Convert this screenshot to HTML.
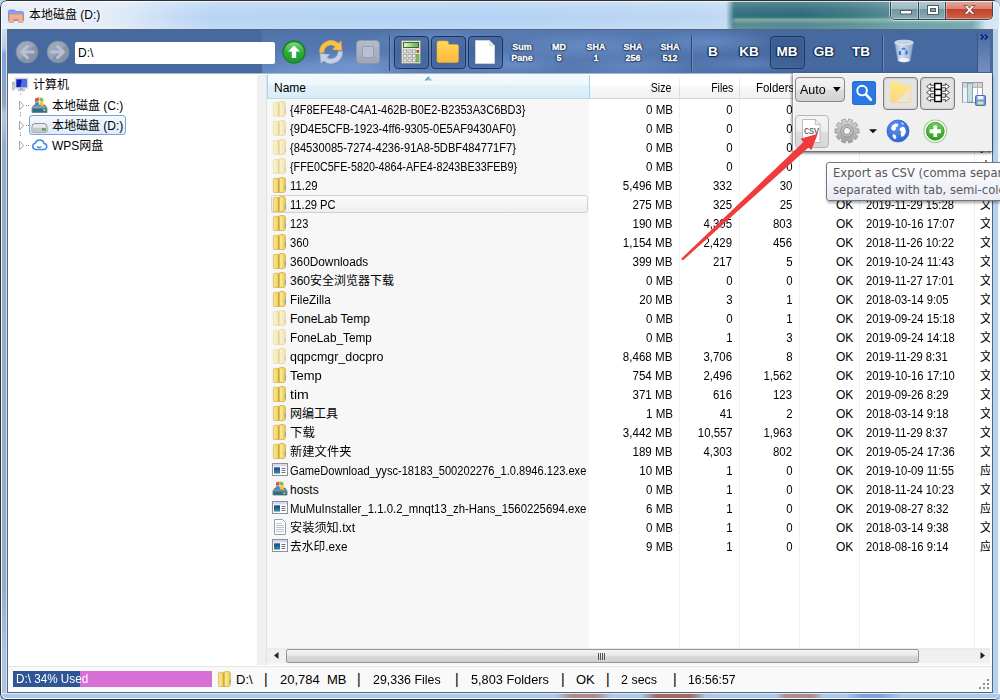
<!DOCTYPE html>
<html lang="zh-CN">
<head>
<meta charset="utf-8">
<title>本地磁盘 (D:)</title>
<style>
*{box-sizing:border-box;margin:0;padding:0}
html,body{width:1000px;height:700px;overflow:hidden}
body{position:relative;font-family:"Liberation Sans","Noto Sans CJK SC",sans-serif;font-size:12px;color:#000;background:#b9d1ea}
.abs{position:absolute}
/* ---------- window frame ---------- */
#frame{position:absolute;left:0;top:0;width:1000px;height:700px;border-radius:7px 7px 6px 6px;
 background:linear-gradient(90deg,#e4edf8 0,#e2ecf8 110px,#c6dcf5 175px,#b7d4f5 215px,#b4d2f4 500px,#bdd7f3 700px,#c2daf3 726px,#357583 734px,#2f6f80 800px,#3f7e8b 850px,#5b96a2 900px,#6ba2ad 972px,#cfe2f5 986px,#d6e6f6 1000px);overflow:hidden}
#frame:before{content:"";position:absolute;left:1px;top:1px;right:0;bottom:1px;border:1px solid rgba(255,255,255,.75);border-radius:6px;z-index:3}
#frame:after{content:"";position:absolute;left:0;top:0;right:-1px;bottom:0;border:1px solid #2b2f36;border-radius:7px 7px 6px 6px;z-index:4}
#tglow{position:absolute;left:1px;top:1px;width:998px;height:28px;background:linear-gradient(180deg,rgba(255,255,255,.25) 0,rgba(255,255,255,.08) 30%,rgba(255,255,255,0) 60%,rgba(255,255,255,.12) 100%)}
#teal{position:absolute;left:730px;top:1px;width:256px;height:28px;background:linear-gradient(180deg,rgba(20,60,70,.1) 0,rgba(20,60,70,.12) 50%,rgba(170,200,170,.0) 58%,rgba(190,215,180,.55) 66%,rgba(190,215,180,.4) 74%,rgba(120,170,175,.35) 82%,rgba(120,170,175,.35) 100%);-webkit-mask-image:linear-gradient(90deg,transparent 0,#000 6px,#000 236px,transparent 252px);mask-image:linear-gradient(90deg,transparent 0,#000 6px,#000 236px,transparent 252px)}
#sideL{position:absolute;left:1px;top:29px;width:6px;height:664px;background:linear-gradient(180deg,#cfdef0 0,#b5cdea 18px,#7fa6d8 25px,#7fa6d8 50px,#8fa3bd 58px,#93a6be 75px,#b4c6dc 85px,#aabdd6 100px,#93adcb 115px,#93adcb 560px,#a8c4e2 620px,#a8c4e2 100%);border-left:1px solid #e6f0fa;border-right:1px solid #cfe0f2}
#sideR{position:absolute;left:993px;top:29px;width:7px;height:664px;background:#b5d3f1;border-right:2px solid #eef5fc}
#sideB{position:absolute;left:1px;top:693px;width:999px;height:6px;background:linear-gradient(90deg,#a9c9ee 0,#a9c9ee 555px,#b08a8a 570px,#b08a8a 595px,#a9c9ee 610px,#a9c9ee 640px,#a36a64 655px,#a36a64 690px,#a9c9ee 705px,#a9c9ee 775px,#b28c8c 785px,#b28c8c 812px,#a9c9ee 822px,#a9c9ee 845px,#7fa3dc 860px,#7fa3dc 880px,#a9c9ee 900px);border-top:1px solid #dbe9f6;border-bottom:1px solid #dbe9f6}
#inner{position:absolute;left:7px;top:29px;width:986px;height:664px;border:1px solid #5a6675;background:#fff}
#titleicon{position:absolute;left:7px;top:7px}
#title{position:absolute;left:29px;top:6px;font-size:12px;line-height:18px;color:#000;white-space:nowrap;text-shadow:0 0 6px #fff,0 0 8px #fff,0 0 10px #fff}
/* window controls */
#ctl{position:absolute;left:890px;top:0;width:103px;height:20px;border:1px solid #3a4550;border-top:0;border-radius:0 0 5px 5px;overflow:hidden;box-shadow:0 0 0 1px rgba(255,255,255,.55)}
#ctl div{position:absolute;top:0;height:19px;box-shadow:inset 0 0 0 1px rgba(255,255,255,.35)}
#cmin{left:0;width:28px;background:linear-gradient(180deg,#b7cdd3 0,#9dbac2 45%,#6e97a2 50%,#88aeb8 100%);border-right:1px solid #3a4550}
#cmax{left:28px;width:27px;background:linear-gradient(180deg,#b7cdd3 0,#9dbac2 45%,#6e97a2 50%,#88aeb8 100%);border-right:1px solid #3a4550}
#ccls{left:55px;width:47px;background:linear-gradient(180deg,#e9aea0 0,#d98573 45%,#c2432a 50%,#d2634a 100%)}
/* ---------- toolbar ---------- */
#tb{position:absolute;left:8px;top:30px;width:984px;height:44px;background:#466a9f;overflow:hidden;z-index:2;border-bottom:1px solid #a3b6d2}
#smoke{position:absolute;left:0;top:0;width:984px;height:44px;background:
 linear-gradient(90deg,rgba(125,160,220,0) 253px,rgba(125,160,220,.28) 255px,rgba(125,160,220,.28) 600px,rgba(125,160,220,.18) 700px,rgba(125,160,220,0) 770px),
 radial-gradient(ellipse 55px 16px at 345px 36px,rgba(125,160,220,.55),rgba(125,160,220,0) 100%),
 radial-gradient(ellipse 45px 12px at 300px 40px,rgba(125,160,220,.35),rgba(125,160,220,0) 100%),
 radial-gradient(ellipse 70px 12px at 420px 10px,rgba(125,160,220,.45),rgba(125,160,220,0) 100%),
 radial-gradient(ellipse 60px 12px at 500px 34px,rgba(125,160,220,.5),rgba(125,160,220,0) 100%),
 radial-gradient(ellipse 80px 14px at 580px 16px,rgba(125,160,220,.45),rgba(125,160,220,0) 100%),
 radial-gradient(ellipse 60px 12px at 625px 36px,rgba(125,160,220,.35),rgba(125,160,220,0) 100%),
 radial-gradient(ellipse 70px 12px at 700px 12px,rgba(125,160,220,.45),rgba(125,160,220,0) 100%),
 radial-gradient(ellipse 60px 9px at 745px 34px,rgba(125,160,220,.35),rgba(125,160,220,0) 100%)}
#smoke2{position:absolute;left:254px;top:0;width:190px;height:44px;background:linear-gradient(180deg,rgba(60,95,150,.25) 0,rgba(125,160,220,0) 45%,rgba(135,170,228,.38) 100%);-webkit-mask-image:linear-gradient(90deg,#000 0,#000 110px,transparent 190px);mask-image:linear-gradient(90deg,#000 0,#000 110px,transparent 190px)}
#tb .sep{position:absolute;top:5px;width:2px;height:36px;border-left:1px solid #2b4674;border-right:1px solid #6d8cbd}
#addr{position:absolute;left:67px;top:11.500px;width:200px;height:22px;background:#fff;border-radius:2px;font-size:12px;line-height:22px;padding-left:3px}
.tbtn{position:absolute;top:6px;width:35px;height:33px;border:1px solid #1c355c;border-radius:4px;background:rgba(40,70,120,.35);box-shadow:inset 0 0 0 1px rgba(90,120,170,.35)}
.sum{-webkit-text-stroke:.3px #fff;position:absolute;top:11.500px;width:40px;text-align:center;font-weight:bold;font-size:9px;line-height:11.300px;color:#fff;text-shadow:0 0 2px #10254a,0 1px 1px #10254a,1px 0 1px #10254a,-1px 0 1px #10254a}
.unit{position:absolute;top:13px;width:36px;text-align:center;font-weight:bold;font-size:13.600px;line-height:18px;color:#fff;text-shadow:0 0 2px #10254a,0 1px 1px #10254a,1px 0 1px #10254a,-1px 0 1px #10254a}
#ovf{position:absolute;left:969px;top:3px;width:13px;height:39px;background:linear-gradient(180deg,#4a6ba0,#7690bd);border-left:1px solid #3a5686}
/* ---------- tree ---------- */
#tree{position:absolute;left:8px;top:73px;width:249px;height:593px;background:#fff}
.tn{position:absolute;font-size:12px;line-height:18px;white-space:nowrap}
#split{position:absolute;left:257px;top:75px;width:10px;height:590px;background:#f0f0f0;border-right:1px solid #e2e2e2}
/* ---------- list ---------- */
#list{position:absolute;left:267px;top:73px;width:723px;height:575px;background:#fff;overflow:hidden}
#ncol{position:absolute;left:0;top:0;width:322px;height:575px;background:#f7f7f7}
.vl{position:absolute;top:26px;width:1px;height:549px;background:#eaf0f7}
#hdr{position:absolute;left:0;top:2px;width:723px;height:24px;background:linear-gradient(180deg,#fff 0,#fff 45%,#f7f8fa 50%,#f1f2f4 100%);border-bottom:1px solid #d5d5d5}
#hname{position:absolute;left:0;top:0;width:323px;height:24px;border-bottom:1px solid #bddbe9;background:linear-gradient(180deg,#f3f9fd 0,#f1f8fc 40%,#e2f1f9 44%,#d9ecf6 100%);border-left:1px solid #96d9f9;border-right:1px solid #96d9f9}
.hc{position:absolute;top:5px;font-size:12px;line-height:16px;white-space:nowrap}
.hs{position:absolute;top:2px;width:1px;height:20px;background:linear-gradient(180deg,#f2f2f2,#d5d5d5)}
.row{position:absolute;left:0;width:723px;height:19px;line-height:19px;font-size:12px;white-space:nowrap}
.row .ic{position:absolute;left:5px;top:1px}
.row .nm{position:absolute;left:23px;top:1px;transform-origin:0 50%}
.row .c{position:absolute;top:1px}
.sz{right:317.300px;transform:scaleX(.965);transform-origin:100% 50%}.fl{right:257.500px;transform:scaleX(.95);transform-origin:100% 50%}.fd{right:197.500px;transform:scaleX(.95);transform-origin:100% 50%}.ok{left:569px}.dt{left:598.500px;transform:scaleX(.937);transform-origin:0 50%}.ty{left:713px}
#hov{position:absolute;left:4px;top:122px;width:317px;height:18px;border:1px solid #cdd2da;border-radius:3px;background:linear-gradient(180deg,#fbfbfb,#eceef1)}
/* scrollbar */
#hsb{position:absolute;left:267px;top:648px;width:723px;height:17px;background:linear-gradient(180deg,#e9e9e9 0,#f0f0f0 3px,#f0f0f0 15px,#f8f8f8 15px)}
#thumb{position:absolute;left:19px;top:.5px;width:633px;height:14px;border:1px solid #979797;border-radius:2px;background:linear-gradient(180deg,#f3f3f3 0,#e8e8e9 45%,#d9dadb 50%,#cfcfd0 100%)}
/* ---------- status ---------- */
#status{position:absolute;left:8px;top:666px;width:984px;height:26px;background:#f9f9f9;border-top:1px solid #e6e6e6;font-size:13px;line-height:26px;white-space:nowrap}
#status span{position:absolute;top:0;transform-origin:0 50%}
#pbar{position:absolute;left:5px;top:4px;width:199px;height:16px;background:#d670d6}
#pfill{position:absolute;left:0;top:0;width:67px;height:16px;background:#2f5597}
#ptext{position:absolute;left:3px;top:0;font-size:12px;line-height:16px;color:#fff;transform:scaleX(.975);transform-origin:0 50%;white-space:nowrap}
/* ---------- popup ---------- */
#pop{z-index:5;position:absolute;left:793px;top:73px;width:199px;height:78px;background:#f0f0f0;border-left:1px solid #fbfbfb;border-top:1px solid #fbfbfb;box-shadow:0 1px 0 rgba(110,110,110,.8),-1px 1px 3px rgba(0,0,0,.45),0 2px 3px rgba(0,0,0,.4)}
.pbtn{position:absolute;border:1px solid #8a8a8a;border-radius:4px;background:linear-gradient(180deg,#f2f2f2 0,#ebebeb 48%,#dddddd 52%,#d2d2d2 100%)}
.pbtn2{position:absolute;border:1px solid #7c7c7c;border-radius:4px;background:#e3e3e3;box-shadow:inset 0 0 2px rgba(0,0,0,.25)}
#tip{z-index:6;position:absolute;left:826px;top:162px;width:190px;height:39px;border:1px solid #767676;border-radius:3px;background:linear-gradient(180deg,#fff,#e9ebf6);box-shadow:1px 2px 3px rgba(0,0,0,.35);font-family:"DejaVu Sans","Liberation Sans",sans-serif;font-size:11.600px;line-height:17px;color:#575757;padding:2px 0 0 6px;white-space:nowrap;overflow:hidden}
</style>
</head>
<body>
<svg width="0" height="0" style="position:absolute">
<defs>
<linearGradient id="gF" x1="0" y1="0" x2="1" y2="0"><stop offset="0" stop-color="#f8e9a0"/><stop offset=".5" stop-color="#f3d978"/><stop offset="1" stop-color="#e8c452"/></linearGradient>
<linearGradient id="gFp" x1="0" y1="0" x2="1" y2="0"><stop offset="0" stop-color="#fbf4d2"/><stop offset=".5" stop-color="#f6ecbf"/><stop offset="1" stop-color="#efe2aa"/></linearGradient>
<symbol id="i-f" viewBox="0 0 16 16"><path d="M1.400 2.200q0-.8 .8-.8h4.300l.8 .8v12.800l-.8 .5h-4.300q-.8 0-.8-.8z" fill="url(#gF)" stroke="#d3b144" stroke-width=".7"/><path d="M6.800 1.500l1.200-.9h4.200l1.200 1.300v12.200l-1.300 1.400h-5.300z" fill="url(#gF2)" stroke="#cfa93c" stroke-width=".7"/><path d="M6.900 1.800v13.400" stroke="#c19c25" stroke-width=".9"/><path d="M8 2.200h1.600v12.400h-1.600z" fill="#fbeea8" opacity=".55"/><path d="M13.300 8.500v4" stroke="#6f9fc4" stroke-width="1"/></symbol>
<symbol id="i-fp" viewBox="0 0 16 16"><path d="M1.400 2.200q0-.8 .8-.8h4.300l.8 .8v12.800l-.8 .5h-4.300q-.8 0-.8-.8z" fill="url(#gFp)" stroke="#e9dca8" stroke-width=".7"/><path d="M6.800 1.500l1.200-.9h4.200l1.200 1.300v12.200l-1.300 1.400h-5.300z" fill="url(#gFp)" stroke="#e3d499" stroke-width=".7"/><path d="M6.900 1.800v13.400" stroke="#dccb8c" stroke-width=".9"/><path d="M13.300 8.500v4" stroke="#b4cbe0" stroke-width="1"/></symbol>
<symbol id="i-exe" viewBox="0 0 16 16"><rect x=".5" y="1.5" width="15" height="12" fill="#fff" stroke="#8a8f98"/><rect x="1" y="2" width="14" height="2.5" fill="#d5dbe4"/><rect x="2" y="5.5" width="6" height="6" fill="#2c7f8c"/><rect x="2" y="5.5" width="6" height="3" fill="#2b4f9e"/><path d="M9.5 6.5h4M9.5 8.5h4M9.5 10.5h4" stroke="#6d7480" stroke-width="1"/></symbol>
<symbol id="i-txt" viewBox="0 0 16 16"><path d="M2.5 .5h8l3 3v12h-11z" fill="#fff" stroke="#9aa0a8"/><path d="M4 4.5h6M4 6.5h8M4 8.5h8M4 10.5h8M4 12.5h8" stroke="#b9c3d0" stroke-width="1"/></symbol>
<symbol id="i-hosts" viewBox="0 0 16 16"><path d="M1 10l2-3h10l2 3v4H1z" fill="#7f9096" stroke="#4e5f66" stroke-width=".7"/><rect x="1.5" y="10.5" width="13" height="3.5" fill="#2f6f86"/><rect x="11" y="11.5" width="2.5" height="1.5" fill="#7fe06a"/><path d="M4 1.5l3.5-1v3.5l-3.5 1z" fill="#e8502c"/><path d="M8 .5l3.5 1v3.5l-3.500-1z" fill="#7cc242"/><path d="M4 5.500l3.500-1v3.500l-3.500 1z" fill="#3a8ee0"/><path d="M8 4.500l3.500 1v3.500l-3.500-1z" fill="#f5c431"/></symbol>
<radialGradient id="gNav" cx=".5" cy=".3" r=".8"><stop offset="0" stop-color="#a4aebf"/><stop offset=".6" stop-color="#8f9bb0"/><stop offset="1" stop-color="#8593ab"/></radialGradient>
<linearGradient id="gUp" x1="0" y1="0" x2="0" y2="1"><stop offset="0" stop-color="#7fd97e"/><stop offset=".5" stop-color="#2fae3a"/><stop offset="1" stop-color="#1f9a2c"/></linearGradient>
<linearGradient id="gStop" x1="0" y1="0" x2="0" y2="1"><stop offset="0" stop-color="#b5bccb"/><stop offset="1" stop-color="#9da6b8"/></linearGradient>
<linearGradient id="gLcd" x1="0" y1="0" x2="1" y2="0"><stop offset="0" stop-color="#e8f5dc"/><stop offset="1" stop-color="#5fae45"/></linearGradient>
<linearGradient id="gFold" x1="0" y1="0" x2="0" y2="1"><stop offset="0" stop-color="#ffd95a"/><stop offset="1" stop-color="#fdb93a"/></linearGradient>
<linearGradient id="gFold2" x1="0" y1="0" x2="0" y2="1"><stop offset="0" stop-color="#fee97f"/><stop offset="1" stop-color="#fbd48c"/></linearGradient>
<linearGradient id="gBin" x1="0" y1="0" x2="1" y2="0"><stop offset="0" stop-color="#93acd0"/><stop offset=".35" stop-color="#d5e1ef"/><stop offset=".6" stop-color="#b9cbe2"/><stop offset="1" stop-color="#8ea8cc"/></linearGradient>
<radialGradient id="gGlobe" cx=".4" cy=".3" r=".8"><stop offset="0" stop-color="#5f93f2"/><stop offset="1" stop-color="#2a5fd0"/></radialGradient>
<linearGradient id="gPlus" x1="0" y1="0" x2="0" y2="1"><stop offset="0" stop-color="#6fcf5a"/><stop offset="1" stop-color="#2c9a22"/></linearGradient>
<linearGradient id="gGear" x1="0" y1="0" x2="0" y2="1"><stop offset="0" stop-color="#d2d2d2"/><stop offset=".5" stop-color="#bcbcbc"/><stop offset="1" stop-color="#9f9f9f"/></linearGradient>
<linearGradient id="gF2" x1="0" y1="0" x2="1" y2="0"><stop offset="0" stop-color="#f3d666"/><stop offset=".45" stop-color="#f8e184"/><stop offset="1" stop-color="#e9c44e"/></linearGradient>
<linearGradient id="gNav2" x1="0" y1="0" x2="1" y2="1"><stop offset="0" stop-color="#a3adbf"/><stop offset=".5" stop-color="#98a3b7"/><stop offset=".52" stop-color="#8894a9"/><stop offset="1" stop-color="#8591a7"/></linearGradient>
</defs>
</svg>

<div id="frame">
 <div id="tglow"></div><div id="teal"></div>
 <div id="sideL"></div><div id="sideR"></div><div id="sideB"></div>
 <div id="inner"></div>
 <svg id="titleicon" width="18" height="18" viewBox="0 0 18 18">
  <path d="M1.500 4.500q0-1.500 1.500-1.500h4.500l1.500 1.500h6q1.500 0 1.500 1.500v7.500h-15z" fill="#8aa0ea" stroke="#7286d8" stroke-width=".8"/>
  <path d="M2.500 7.500h13l.5 8h-4.500v-3.500h-5v3.500h-4.500z" fill="#f5b08a" stroke="#e99a72" stroke-width=".8"/>
 </svg>
 <div id="title">本地磁盘 (D:)</div>
 <div id="ctl">
  <div id="cmin"><svg width="27" height="19"><rect x="9.500" y="10.500" width="11" height="3.500" fill="#fff" stroke="#4f5f68"/></svg></div>
  <div id="cmax"><svg width="27" height="19"><rect x="8.500" y="5.500" width="11" height="9" fill="#fff" stroke="#4f5f68"/><rect x="11.500" y="8.500" width="5" height="3" fill="#86a7b1" stroke="#4f5f68"/></svg></div>
  <div id="ccls"><svg width="47" height="19"><path d="M18 5.500h3.200l2.300 2.600 2.300-2.600h3.200l-3.900 4.400 3.900 4.400h-3.200l-2.300-2.600-2.300 2.600h-3.200l3.900-4.400z" fill="#fff" stroke="#6b3a33" stroke-width=".8"/></svg></div>
 </div>
</div>

<!-- TOOLBAR -->
<div id="tb">
 <div id="smoke"></div><div id="smoke2"></div>
 <!-- back / forward -->
 <svg class="abs" style="left:7px;top:10px" width="24" height="24" viewBox="0 0 24 24"><circle cx="12" cy="12" r="11.300" fill="#7f8ba1"/><circle cx="12" cy="12" r="10.400" fill="url(#gNav2)"/><path d="M12.400 6.300L6.500 12l5.900 5.700M6.800 12h11.500" fill="none" stroke="#b7c1d3" stroke-width="3" stroke-linecap="round" stroke-linejoin="round"/></svg>
 <svg class="abs" style="left:38px;top:10px" width="24" height="24" viewBox="0 0 24 24"><circle cx="12" cy="12" r="11.300" fill="#7f8ba1"/><circle cx="12" cy="12" r="10.400" fill="url(#gNav2)"/><path d="M11.600 6.300L17.500 12l-5.900 5.700M17.200 12h-11.500" fill="none" stroke="#b7c1d3" stroke-width="3" stroke-linecap="round" stroke-linejoin="round"/></svg>
 <div id="addr">D:\</div>
 <!-- up -->
 <svg class="abs" style="left:274px;top:10px" width="24" height="24" viewBox="0 0 24 24"><circle cx="12" cy="12" r="11.200" fill="#1f9a2c" stroke="#0f7a1c" stroke-width="1"/><circle cx="12" cy="12" r="9.800" fill="url(#gUp)"/><path d="M12 5.500l6 6h-3.800v6.500h-4.400v-6.500h-3.800z" fill="#fff"/></svg>
 <!-- refresh -->
 <svg class="abs" style="left:310px;top:9px" width="26" height="26" viewBox="0 0 26 26"><path d="M1.500 13.500A11.500 11.500 0 0 1 20.500 4.300L23 1.800L24 11.500L14.300 10.500L17.200 7.600A7 7 0 0 0 6 13.500z" fill="#f7c24c" stroke="#dca338" stroke-width=".6"/><path d="M24.500 12.500A11.500 11.500 0 0 1 5.500 21.700L3 24.200L2 14.500L11.700 15.500L8.800 18.400A7 7 0 0 0 20 12.500z" fill="#c5d0e2" stroke="#a3b3cc" stroke-width=".6"/></svg>
 <!-- stop -->
 <svg class="abs" style="left:348px;top:10px" width="24" height="24" viewBox="0 0 24 24"><rect x=".5" y=".5" width="23" height="23" rx="3.500" fill="url(#gStop)" stroke="#8d97ac"/><rect x="6.500" y="6.500" width="11" height="11" fill="#b9c0cf" stroke="#969fb3"/></svg>
 <div class="sep" style="left:381px"></div>
 <!-- calc / folder / doc buttons -->
 <div class="tbtn" style="left:386px"></div><div class="tbtn" style="left:423px"></div><div class="tbtn" style="left:460px"></div>
 <svg class="abs" style="left:393px;top:10px" width="20" height="24" viewBox="0 0 20 24"><rect x=".5" y=".5" width="19" height="23" rx="1" fill="#e4e4e0" stroke="#8e8e88"/><rect x="2.500" y="2.500" width="15" height="5" fill="url(#gLcd)" stroke="#3b6b2e"/><g fill="#f7f7f5" stroke="#9a9a94" stroke-width=".8"><rect x="2.500" y="10" width="3" height="2.800"/><rect x="7" y="10" width="3" height="2.800"/><rect x="11.500" y="10" width="3" height="2.800"/><rect x="2.500" y="14.500" width="3" height="2.800"/><rect x="7" y="14.500" width="3" height="2.800"/><rect x="11.500" y="14.500" width="3" height="2.800"/><rect x="2.500" y="19" width="3" height="2.800"/><rect x="7" y="19" width="3" height="2.800"/><rect x="11.500" y="19" width="3" height="2.800"/></g><rect x="15.500" y="10" width="2.500" height="2.800" fill="#d8392b"/><rect x="15.500" y="14.500" width="2.500" height="7.300" fill="#7cc25a" stroke="#4f9a36" stroke-width=".6"/></svg>
 <svg class="abs" style="left:428px;top:10px" width="24" height="24" viewBox="0 0 24 24"><path d="M1 3q0-2 2-2h7.500q2 0 2 2v1.500h8q2 0 2 2v14q0 2-2 2h-17.500q-2 0-2-2z" fill="url(#gFold)" stroke="#eab030" stroke-width=".6"/></svg>
 <svg class="abs" style="left:467px;top:10px" width="20" height="24" viewBox="0 0 20 24"><path d="M.5 .5h14l5 5v18h-19z" fill="#fff" stroke="#d6d9de" stroke-width=".8"/><path d="M14.500 .5v5h5z" fill="#e4e7ec" stroke="#c9ccd2" stroke-width=".6"/></svg>
 <div class="sum" style="left:494px">Sum<br>Pane</div>
 <div class="sum" style="left:531px">MD<br>5</div>
 <div class="sum" style="left:568px">SHA<br>1</div>
 <div class="sum" style="left:605px">SHA<br>256</div>
 <div class="sum" style="left:642px">SHA<br>512</div>
 <div class="sep" style="left:683px"></div>
 <div class="tbtn" style="left:762px"></div>
 <div class="unit" style="left:687px">B</div>
 <div class="unit" style="left:723px">KB</div>
 <div class="unit" style="left:761px">MB</div>
 <div class="unit" style="left:798px">GB</div>
 <div class="unit" style="left:835px">TB</div>
 <div class="sep" style="left:874px"></div>
 <!-- recycle bin -->
 <svg class="abs" style="left:885px;top:9px" width="22" height="26" viewBox="0 0 22 26"><path d="M1.800 3.500l3.200 18.500q6 2.500 12 0l3.200-18.500z" fill="url(#gBin)" stroke="#7f9cc4" stroke-width=".6"/><ellipse cx="11" cy="21" rx="5.500" ry="2" fill="#eef2f7"/><ellipse cx="11" cy="3.500" rx="9.300" ry="2.300" fill="#c4d3e6" stroke="#dfe8f3" stroke-width=".9"/><path d="M8 10l2.500-1.500 2.500 1.500-1.200 1-1.300-.8-1.300.8zM6.800 11.500l1.500 1-0.600 2.200 1.500.8-2.800.8-1-2.500zM13.500 11l1.600 2.200-1.300 2.500-2.600-.5 1.500-.8-.5-1.800z" fill="#2f7be0"/></svg>
 <div id="ovf"><svg class="abs" style="left:2px;top:1px" width="9" height="6"><path d="M.8 .5l2.500 2.500-2.500 2.500M4.800 .5l2.500 2.500-2.500 2.500" fill="none" stroke="#0a1a80" stroke-width="1.500"/></svg></div>
</div>

<!-- TREE -->
<div id="tree">
 <svg class="abs" style="left:4px;top:4px" width="17" height="16" viewBox="0 0 17 16"><rect x="0" y="5" width="2.500" height="8" rx="1" fill="#cfd3d8" stroke="#8e949c" stroke-width=".5"/><rect x=".7" y="6" width="1.100" height="1.500" fill="#46c43a"/><rect x="3.500" y="1.500" width="12" height="9.500" fill="#0c1fb4" stroke="#d2d6db" stroke-width="1.600"/><path d="M10 2.500h4.700v7.500h-6.200z" fill="#5a7cf0" opacity=".85"/><rect x="8" y="11" width="3" height="1.500" fill="#aab0b8"/><rect x="6" y="12.500" width="7" height="1.300" rx=".6" fill="#c8ccd2" stroke="#8e949c" stroke-width=".4"/></svg>
 <span class="tn" style="left:25px;top:3px">计算机</span>
 <svg class="abs" style="left:12px;top:19px" width="1" height="50"><path d="M.5 1.500v1M.5 20.500v1M.5 23v1M.5 40.500v1M.5 43v1" stroke="#7a7a7a" stroke-width="1"/></svg>
 <!-- expanders -->
 <svg class="abs" style="left:10px;top:27px" width="14" height="11"><path d="M1.500 1l4 4.500-4 4.500z" fill="#fff" stroke="#a6a6a6"/><path d="M8 5.500h4" stroke="#8c8c8c" stroke-dasharray="1 1"/></svg>
 <svg class="abs" style="left:10px;top:47px" width="14" height="11"><path d="M1.500 1l4 4.500-4 4.500z" fill="#fff" stroke="#a6a6a6"/><path d="M8 5.500h4" stroke="#8c8c8c" stroke-dasharray="1 1"/></svg>
 <svg class="abs" style="left:10px;top:67px" width="14" height="11"><path d="M1.500 1l4 4.500-4 4.500z" fill="#fff" stroke="#a6a6a6"/><path d="M8 5.500h4" stroke="#8c8c8c" stroke-dasharray="1 1"/></svg>
 <div class="abs" style="left:21px;top:42px;width:97px;height:20px;border:1px solid #7da2ce;border-radius:3px;background:linear-gradient(180deg,#f3f8fd,#dcebfc)"></div>
 <!-- C drive -->
 <svg class="abs" style="left:23px;top:23px" width="17" height="18" viewBox="0 0 17 18"><path d="M1 12l2-3h11l2 3v4.500h-15z" fill="#8d9aa0" stroke="#56636a" stroke-width=".7"/><rect x="1.500" y="12.500" width="14" height="3.500" fill="#2d6d86"/><rect x="12" y="13.400" width="2.500" height="1.600" fill="#86e56e"/><path d="M4 2.500l3.800-1.200v3.700l-3.800 1.200z" fill="#e8502c"/><path d="M8.500 1.200l3.800 1.200v3.700l-3.800-1.200z" fill="#7cc242"/><path d="M4 6.700l3.800-1.200v3.700l-3.800 1.200z" fill="#3a8ee0"/><path d="M8.500 5.400l3.800 1.200v3.700l-3.800-1.200z" fill="#f5c431"/></svg>
 <!-- D drive -->
 <svg class="abs" style="left:23px;top:46px" width="17" height="14.500" viewBox="0 0 17 16" preserveAspectRatio="none"><path d="M1 8.500q0-3.500 3-3.500h9q3 0 3 3.500v5q0 1-1 1h-13q-1 0-1-1z" fill="#e9ebec" stroke="#6f767b" stroke-width=".8"/><path d="M1.500 9.500h14v4h-14z" fill="#c3c8cb"/><rect x="11.500" y="10.500" width="3" height="2.200" fill="#4fbf3f" stroke="#2f7f28" stroke-width=".4"/></svg>
 <!-- WPS cloud -->
 <svg class="abs" style="left:23px;top:63.500px" width="17" height="16" viewBox="0 0 17 16"><path d="M4.500 12.500h8a3 3 0 0 0 .5-6 4.500 4.500 0 0 0-8.700-.3 3.200 3.200 0 0 0 .2 6.300z" fill="#fff" stroke="#3f86e8" stroke-width="1.500"/><path d="M6 9.500q2 2 4.500 0" fill="none" stroke="#3f86e8" stroke-width="1.200"/></svg>
 <span class="tn" style="left:44px;top:24px">本地磁盘 (C:)</span>
 <span class="tn" style="left:44px;top:44px">本地磁盘 (D:)</span>
 <span class="tn" style="left:44px;top:64px">WPS网盘</span>
</div>
<div id="split"></div>

<!-- LIST -->
<div id="list">
 <div id="ncol"></div>
 <div class="vl" style="left:412px"></div><div class="vl" style="left:472px"></div><div class="vl" style="left:532px"></div><div class="vl" style="left:592px"></div><div class="vl" style="left:707px"></div>
 <div id="hdr">
  <div id="hname"></div>
  <svg class="abs" style="left:158px;top:1px" width="8" height="5"><path d="M.3 4.500l3.500-3.700 3.500 3.700z" fill="#8fbcd9"/><path d="M.3 4.500l3.500-3.700" stroke="#2f5f8a" stroke-width="1" fill="none"/></svg>
  <span class="hc" style="left:7px">Name</span>
  <span class="hc" style="right:318.500px;transform:scaleX(.885);transform-origin:100% 50%">Size</span>
  <span class="hc" style="right:256.500px;transform:scaleX(.875);transform-origin:100% 50%">Files</span>
  <span class="hc" style="left:489px;transform:scaleX(.955);transform-origin:0 50%">Folders</span>
  <div class="hs" style="left:412px"></div><div class="hs" style="left:472px"></div>
 </div>
<div id="hov"></div>
<div class="row" style="top:27px"><svg class="ic" width="16" height="16" viewBox="0 0 16 16"><use href="#i-fp"/></svg><span class="nm" style="transform:scaleX(0.9162)">{4F8EFE48-C4A1-462B-B0E2-B2353A3C6BD3}</span><span class="c sz">0 MB</span><span class="c fl">0</span><span class="c fd">0</span><span class="c ty">文</span></div>
<div class="row" style="top:46px"><svg class="ic" width="16" height="16" viewBox="0 0 16 16"><use href="#i-fp"/></svg><span class="nm" style="transform:scaleX(0.9289)">{9D4E5CFB-1923-4ff6-9305-0E5AF9430AF0}</span><span class="c sz">0 MB</span><span class="c fl">0</span><span class="c fd">0</span><span class="c ty">文</span></div>
<div class="row" style="top:65px"><svg class="ic" width="16" height="16" viewBox="0 0 16 16"><use href="#i-fp"/></svg><span class="nm" style="transform:scaleX(0.9281)">{84530085-7274-4236-91A8-5DBF484771F7}</span><span class="c sz">0 MB</span><span class="c fl">0</span><span class="c fd">0</span><span class="c ty">文</span></div>
<div class="row" style="top:84px"><svg class="ic" width="16" height="16" viewBox="0 0 16 16"><use href="#i-fp"/></svg><span class="nm" style="transform:scaleX(0.896)">{FFE0C5FE-5820-4864-AFE4-8243BE33FEB9}</span><span class="c sz">0 MB</span><span class="c fl">0</span><span class="c fd">0</span><span class="c ty">文</span></div>
<div class="row" style="top:103px"><svg class="ic" width="16" height="16" viewBox="0 0 16 16"><use href="#i-f"/></svg><span class="nm" style="transform:scaleX(0.942)">11.29</span><span class="c sz">5,496 MB</span><span class="c fl">332</span><span class="c fd">30</span><span class="c ty">文</span></div>
<div class="row hov" style="top:122px"><svg class="ic" width="16" height="16" viewBox="0 0 16 16"><use href="#i-f"/></svg><span class="nm" style="transform:scaleX(0.9266)">11.29 PC</span><span class="c sz">275 MB</span><span class="c fl">325</span><span class="c fd">25</span><span class="c ok">OK</span><span class="c dt">2019-11-29 15:28</span><span class="c ty">文</span></div>
<div class="row" style="top:141px"><svg class="ic" width="16" height="16" viewBox="0 0 16 16"><use href="#i-f"/></svg><span class="nm" style="transform:scaleX(0.9135)">123</span><span class="c sz">190 MB</span><span class="c fl">4,305</span><span class="c fd">803</span><span class="c ok">OK</span><span class="c dt">2019-10-16 17:07</span><span class="c ty">文</span></div>
<div class="row" style="top:160px"><svg class="ic" width="16" height="16" viewBox="0 0 16 16"><use href="#i-f"/></svg><span class="nm" style="transform:scaleX(0.9351)">360</span><span class="c sz">1,154 MB</span><span class="c fl">2,429</span><span class="c fd">456</span><span class="c ok">OK</span><span class="c dt">2018-11-26 10:22</span><span class="c ty">文</span></div>
<div class="row" style="top:179px"><svg class="ic" width="16" height="16" viewBox="0 0 16 16"><use href="#i-f"/></svg><span class="nm" style="transform:scaleX(0.9859)">360Downloads</span><span class="c sz">399 MB</span><span class="c fl">217</span><span class="c fd">5</span><span class="c ok">OK</span><span class="c dt">2019-10-24 11:43</span><span class="c ty">文</span></div>
<div class="row" style="top:198px"><svg class="ic" width="16" height="16" viewBox="0 0 16 16"><use href="#i-f"/></svg><span class="nm" style="transform:scaleX(1)">360安全浏览器下载</span><span class="c sz">0 MB</span><span class="c fl">0</span><span class="c fd">0</span><span class="c ok">OK</span><span class="c dt">2019-11-27 17:01</span><span class="c ty">文</span></div>
<div class="row" style="top:217px"><svg class="ic" width="16" height="16" viewBox="0 0 16 16"><use href="#i-f"/></svg><span class="nm" style="transform:scaleX(0.9874)">FileZilla</span><span class="c sz">20 MB</span><span class="c fl">3</span><span class="c fd">1</span><span class="c ok">OK</span><span class="c dt">2018-03-14 9:05</span><span class="c ty">文</span></div>
<div class="row" style="top:236px"><svg class="ic" width="16" height="16" viewBox="0 0 16 16"><use href="#i-fp"/></svg><span class="nm" style="transform:scaleX(1)">FoneLab Temp</span><span class="c sz">0 MB</span><span class="c fl">0</span><span class="c fd">1</span><span class="c ok">OK</span><span class="c dt">2019-09-24 15:18</span><span class="c ty">文</span></div>
<div class="row" style="top:255px"><svg class="ic" width="16" height="16" viewBox="0 0 16 16"><use href="#i-fp"/></svg><span class="nm" style="transform:scaleX(0.9805)">FoneLab_Temp</span><span class="c sz">0 MB</span><span class="c fl">1</span><span class="c fd">3</span><span class="c ok">OK</span><span class="c dt">2019-09-24 14:18</span><span class="c ty">文</span></div>
<div class="row" style="top:274px"><svg class="ic" width="16" height="16" viewBox="0 0 16 16"><use href="#i-fp"/></svg><span class="nm" style="transform:scaleX(1.0361)">qqpcmgr_docpro</span><span class="c sz">8,468 MB</span><span class="c fl">3,706</span><span class="c fd">8</span><span class="c ok">OK</span><span class="c dt">2019-11-29 8:31</span><span class="c ty">文</span></div>
<div class="row" style="top:293px"><svg class="ic" width="16" height="16" viewBox="0 0 16 16"><use href="#i-f"/></svg><span class="nm" style="transform:scaleX(1.0791)">Temp</span><span class="c sz">754 MB</span><span class="c fl">2,496</span><span class="c fd">1,562</span><span class="c ok">OK</span><span class="c dt">2019-10-16 17:10</span><span class="c ty">文</span></div>
<div class="row" style="top:312px"><svg class="ic" width="16" height="16" viewBox="0 0 16 16"><use href="#i-f"/></svg><span class="nm" style="transform:scaleX(1.1724)">tim</span><span class="c sz">371 MB</span><span class="c fl">616</span><span class="c fd">123</span><span class="c ok">OK</span><span class="c dt">2019-09-26 8:29</span><span class="c ty">文</span></div>
<div class="row" style="top:331px"><svg class="ic" width="16" height="16" viewBox="0 0 16 16"><use href="#i-f"/></svg><span class="nm" style="transform:scaleX(1)">网编工具</span><span class="c sz">1 MB</span><span class="c fl">41</span><span class="c fd">2</span><span class="c ok">OK</span><span class="c dt">2018-03-14 9:18</span><span class="c ty">文</span></div>
<div class="row" style="top:350px"><svg class="ic" width="16" height="16" viewBox="0 0 16 16"><use href="#i-f"/></svg><span class="nm" style="transform:scaleX(1.0444)">下载</span><span class="c sz">3,442 MB</span><span class="c fl">10,557</span><span class="c fd">1,963</span><span class="c ok">OK</span><span class="c dt">2019-11-29 8:37</span><span class="c ty">文</span></div>
<div class="row" style="top:369px"><svg class="ic" width="16" height="16" viewBox="0 0 16 16"><use href="#i-f"/></svg><span class="nm" style="transform:scaleX(1.0256)">新建文件夹</span><span class="c sz">189 MB</span><span class="c fl">4,303</span><span class="c fd">802</span><span class="c ok">OK</span><span class="c dt">2019-05-24 17:36</span><span class="c ty">文</span></div>
<div class="row" style="top:388px"><svg class="ic" width="16" height="16" viewBox="0 0 16 16"><use href="#i-exe"/></svg><span class="nm" style="transform:scaleX(0.9253)">GameDownload_yysc-18183_500202276_1.0.8946.123.exe</span><span class="c sz">10 MB</span><span class="c fl">1</span><span class="c fd">0</span><span class="c ok">OK</span><span class="c dt">2019-10-09 11:55</span><span class="c ty">应</span></div>
<div class="row" style="top:407px"><svg class="ic" width="16" height="16" viewBox="0 0 16 16"><use href="#i-hosts"/></svg><span class="nm" style="transform:scaleX(1)">hosts</span><span class="c sz">0 MB</span><span class="c fl">1</span><span class="c fd">0</span><span class="c ok">OK</span><span class="c dt">2018-11-24 10:23</span><span class="c ty">文</span></div>
<div class="row" style="top:426px"><svg class="ic" width="16" height="16" viewBox="0 0 16 16"><use href="#i-exe"/></svg><span class="nm" style="transform:scaleX(0.9473)">MuMuInstaller_1.1.0.2_mnqt13_zh-Hans_1560225694.exe</span><span class="c sz">6 MB</span><span class="c fl">1</span><span class="c fd">0</span><span class="c ok">OK</span><span class="c dt">2019-08-27 8:32</span><span class="c ty">应</span></div>
<div class="row" style="top:445px"><svg class="ic" width="16" height="16" viewBox="0 0 16 16"><use href="#i-txt"/></svg><span class="nm" style="transform:scaleX(1.016)">安装须知.txt</span><span class="c sz">0 MB</span><span class="c fl">1</span><span class="c fd">0</span><span class="c ok">OK</span><span class="c dt">2018-03-14 9:38</span><span class="c ty">文</span></div>
<div class="row" style="top:464px"><svg class="ic" width="16" height="16" viewBox="0 0 16 16"><use href="#i-exe"/></svg><span class="nm" style="transform:scaleX(0.979)">去水印.exe</span><span class="c sz">9 MB</span><span class="c fl">1</span><span class="c fd">0</span><span class="c ok">OK</span><span class="c dt">2018-08-16 9:14</span><span class="c ty">应</span></div>
</div>
<div id="hsb">
 <svg class="abs" style="left:7px;top:4px" width="5" height="7"><path d="M4.500 0v7l-4.500-3.500z" fill="#222"/></svg>
 <div id="thumb"><svg class="abs" style="left:311px;top:3px" width="8" height="7"><path d="M.5 0v7M2.500 0v7M4.500 0v7M6.500 0v7" stroke="#555" stroke-width="1"/></svg></div>
 <svg class="abs" style="left:712.500px;top:4px" width="5" height="7"><path d="M.5 0v7l4.500-3.500z" fill="#222"/></svg>
</div>

<!-- STATUS -->
<div id="status">
 <div id="pbar"><div id="pfill"></div><div id="ptext">D:\ 34% Used</div></div>
 <svg class="abs" style="left:209px;top:4px" width="16" height="16" viewBox="0 0 16 16"><use href="#i-f"/></svg>
 <span style="left:228px">D:\</span>
 <span style="left:256px;font-size:14px;top:-1px">|</span>
 <span style="left:272px">20,784&nbsp; MB</span>
 <span style="left:349px;font-size:14px;top:-1px">|</span>
 <span style="left:365px;transform:scaleX(.955)">29,336 Files</span>
 <span style="left:447px;font-size:14px;top:-1px">|</span>
 <span style="left:463px;transform:scaleX(.98)">5,803 Folders</span>
 <span style="left:553px;font-size:14px;top:-1px">|</span>
 <span style="left:568px">OK</span>
 <span style="left:598px;font-size:14px;top:-1px">|</span>
 <span style="left:613px;transform:scaleX(.96)">2 secs</span>
 <span style="left:665px;font-size:14px;top:-1px">|</span>
 <span style="left:680px;transform:scaleX(.94)">16:56:57</span>
 <svg class="abs" style="left:970px;top:12px" width="12" height="12"><path d="M9 0h2v2h-2zM5 4h2v2h-2zM9 4h2v2h-2zM1 8h2v2h-2zM5 8h2v2h-2zM9 8h2v2h-2z" fill="#8f8f8f"/></svg>
</div>

<!-- POPUP -->
<div id="pop">
 <!-- Auto -->
 <div class="pbtn" style="left:1px;top:3px;width:50px;height:25px"></div>
 <span class="abs" style="left:5.500px;top:7px;font-size:13px;line-height:18px;transform:scaleX(.96);transform-origin:0 50%">Auto</span>
 <svg class="abs" style="left:39px;top:13px" width="8" height="5"><path d="M0 0h7.600l-3.800 4.800z" fill="#000"/></svg>
 <!-- search -->
 <svg class="abs" style="left:58px;top:7px" width="24" height="24" viewBox="0 0 25 25"><rect x=".5" y=".5" width="24" height="24" rx="2" fill="#2b78e4" stroke="#1f66d0"/><circle cx="10.500" cy="10" r="5" fill="none" stroke="#fff" stroke-width="2"/><path d="M14.500 14l5 5.500" stroke="#fff" stroke-width="2.800" stroke-linecap="round"/></svg>
 <!-- folder toggle -->
 <div class="pbtn2" style="left:89px;top:3px;width:35px;height:33px"></div>
 <svg class="abs" style="left:94.500px;top:6.500px" width="23" height="23.500" viewBox="0 0 23 24" preserveAspectRatio="none"><path d="M1 3q0-2 2-2h6.500q2 0 2 2v1.500h8.500q2 0 2 2v14q0 2-2 2h-17q-2 0-2-2z" fill="url(#gFold2)"/><path d="M21 8v12.500q0 1-1 1h-13z" fill="#e9e4dc" opacity=".9"/></svg>
 <!-- columns autosize -->
 <div class="pbtn2" style="left:126px;top:3px;width:35px;height:33px"></div>
 <svg class="abs" style="left:132px;top:8px" width="24" height="22" viewBox="0 0 24 22"><path d="M8.700 3.3h-4.200v-1.800l-4 3 4 3v-1.800h4.200zM15.300 3.3h4.200v-1.800l4 3-4 3v-1.800h-4.200zM8.700 9.3h-4.200v-1.800l-4 3 4 3v-1.800h4.200zM15.300 9.3h4.200v-1.800l4 3-4 3v-1.800h-4.200zM8.700 15.3h-4.200v-1.800l-4 3 4 3v-1.800h4.200zM15.300 15.3h4.200v-1.800l4 3-4 3v-1.800h-4.200z" fill="#fff" stroke="#3a3a3a" stroke-width=".9" stroke-linejoin="miter"/><g fill="#fff" stroke="#000" stroke-width="1.400"><rect x="8.700" y="1.500" width="6.600" height="6"/><rect x="8.700" y="7.500" width="6.600" height="6"/><rect x="8.700" y="13.500" width="6.600" height="6"/></g></svg>
 <!-- grid save -->
 <svg class="abs" style="left:168px;top:8px" width="24" height="24" viewBox="0 0 24 24"><rect x=".5" y=".5" width="20" height="20" fill="#fff" stroke="#9a9a9a"/><rect x="1" y="1" width="19" height="4" fill="#d4d4d4"/><path d="M5.500 1v19M10.500 1v19M15.500 1v19M1 5.500h19" stroke="#b8b8b8" stroke-width="1"/><rect x="1" y="5.500" width="4.500" height="15" fill="#e8f4fb"/><rect x="5.500" y="1.500" width="5" height="18.500" fill="#c9dfd0" stroke="#2a8fd0" stroke-dasharray="1 1" stroke-width="1"/><rect x="13.500" y="13.500" width="10" height="10" rx="1" fill="#6f93d6" stroke="#4a6fb5"/><rect x="15.500" y="14" width="6" height="3.500" fill="#eef3fb"/><rect x="15.500" y="19.500" width="6" height="3" fill="#cfe9a8"/></svg>
 <!-- csv -->
 <div class="pbtn" style="left:.5px;top:41px;width:34px;height:33px;border-color:#b5b5b5;background:linear-gradient(180deg,#f4f4f4 0,#ededed 48%,#dedede 52%,#d6d6d6 100%)"></div>
 <svg class="abs" style="left:8px;top:45px" width="19" height="24.500" viewBox="0 0 20 25" preserveAspectRatio="none"><path d="M.5 .5h13.500l5 5v18.500h-18.500z" fill="#fff" stroke="#b9b9b9"/><path d="M14 .5v5h5" fill="#f0f0f0" stroke="#b9b9b9"/></svg>
 <span class="abs" style="left:10px;top:51px;font-size:10px;line-height:12px;color:#4d4d4d">csv</span>
 <!-- gear -->
 <svg class="abs" style="left:40.300px;top:43.500px" width="26" height="26" viewBox="-13 -13 26 26"><path d="M8.92 -2.26L12.02 -2.10L12.02 2.10L8.92 2.26L8.54 3.41L10.96 5.37L8.49 8.76L5.89 7.07L4.91 7.78L5.71 10.78L1.72 12.08L0.61 9.18L-0.61 9.18L-1.72 12.08L-5.71 10.78L-4.91 7.78L-5.89 7.07L-8.49 8.76L-10.96 5.37L-8.54 3.41L-8.92 2.26L-12.02 2.10L-12.02 -2.10L-8.92 -2.26L-8.54 -3.41L-10.96 -5.37L-8.49 -8.76L-5.89 -7.07L-4.91 -7.78L-5.71 -10.78L-1.72 -12.08L-0.61 -9.18L0.61 -9.18L1.72 -12.08L5.71 -10.78L4.91 -7.78L5.89 -7.07L8.49 -8.76L10.96 -5.37L8.54 -3.41z" fill="url(#gGear)" stroke="#8f8f8f" stroke-width=".7" stroke-linejoin="round"/><circle r="6.300" fill="none" stroke="#8d8d8d" stroke-width=".8"/><circle r="5.200" fill="#bdbdbd"/><circle r="3.600" fill="#f2f2f2" stroke="#8a8a8a" stroke-width=".9"/></svg>
 <svg class="abs" style="left:74.500px;top:54.700px" width="8" height="4.500" viewBox="0 0 8 4"><path d="M0 0h8l-4 4z" fill="#111"/></svg>
 <!-- globe -->
 <svg class="abs" style="left:91.800px;top:44.500px" width="24" height="24" viewBox="0 0 24 24"><circle cx="12" cy="12" r="11" fill="url(#gGlobe)" stroke="#3d66c9" stroke-width=".8"/><path d="M6 6.500l3.500-2 3 .5-1 2.500-2 1 .5 2-2.500 1.500-2.500-2zM14 9l3-1.500 2 1.500 1 4-2 4-2.500 1-1-3 1-2.500-2-1zM7 15l2.500 1 1 3-2 1.200-2-2.700zM15 3.500l2 .5 1 1.500-2-.3z" fill="#fff"/></svg>
 <!-- plus -->
 <svg class="abs" style="left:129px;top:45px" width="24.500" height="24.500" viewBox="0 0 26 26"><circle cx="13" cy="13" r="12" fill="#fff" stroke="#9fd08f" stroke-width="1.200"/><circle cx="13" cy="13" r="9.500" fill="url(#gPlus)" stroke="#2f8a22" stroke-width=".8"/><path d="M11 7h4v4h4v4h-4v4h-4v-4h-4v-4h4z" fill="#fff"/></svg>
</div>

<!-- TOOLTIP -->
<div id="tip">Export as CSV (comma separated values) file<br>separated with tab, semi-colon or comma</div>

<!-- ARROW -->
<svg class="abs" style="left:0;top:0;z-index:7" width="1000" height="700"><path d="M681.200 258.700L803.500 142L800.600 138.700L817.800 133.700L811.400 150L808.500 147.500L682.700 260.600z" fill="#ef3b3b"/></svg>
</body>
</html>
